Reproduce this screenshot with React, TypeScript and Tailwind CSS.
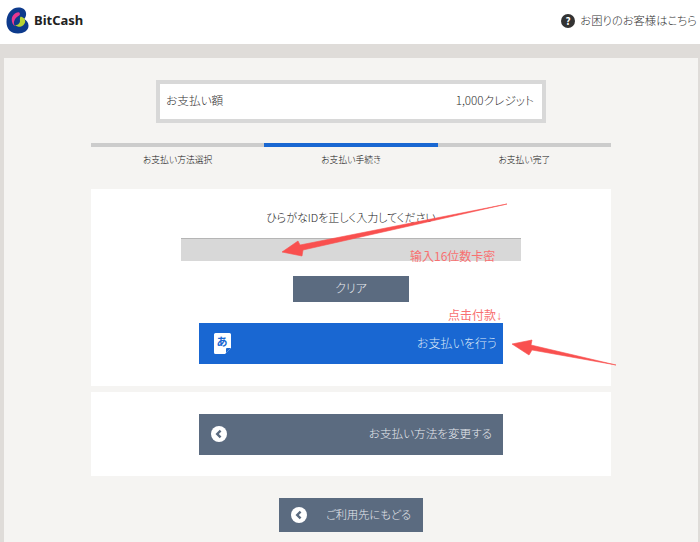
import React from "react";

const font = { fontFamily: '"Noto Sans CJK JP", "Noto Sans", sans-serif' };

function BackIcon() {
  return (
    <svg width="16" height="16" viewBox="0 0 16 16" className="shrink-0">
      <circle cx="8" cy="8" r="8" fill="#fff" />
      <path d="M9.6 4.6 6.2 8l3.4 3.4" fill="none" stroke="#5b6b80" strokeWidth="2.4" />
    </svg>
  );
}

function Logo() {
  return (
    <svg width="23" height="27" viewBox="0 0 24 28" className="shrink-0">
      <path d="M13 .5c5 0 8 2.600 8 6.600 0 2.400-1 4-2 5.400 2.500 1.500 4.500 3.800 4.500 7 0 5-5 8-11 8C5 27.500.5 23 .5 15.500.5 7 6 .5 13 .5z" fill="#0d3a8c" />
      <path d="M13 5.500c-4 .5-7 3.500-7 8 0 3 1.500 5.500 3.500 6.500-1.500-2-1.500-4.500-.5-6.500 1-2 3-4 5-5 1-.6.500-3-1-3z" fill="#e8388f" />
      <path d="M15 10c3 0 5.500 2.500 5 5.500-.6 3-4 5.500-7 5-2-.4-3.500-1.500-3.500-1.500 2 0 4.500-1.500 5-3.500.4-1.600-.5-3.500.5-5.500z" fill="#b7d433" />
    </svg>
  );
}

function PayIcon() {
  return (
    <svg width="17" height="21" viewBox="0 0 17 21" className="shrink-0">
      <path d="M1.500 0h14A1.500 1.500 0 0 1 17 1.500V15l-6 6H1.500A1.500 1.500 0 0 1 0 19.500v-18A1.500 1.500 0 0 1 1.500 0z" fill="#fff" />
      <path d="M12 20l5-5h-4a1 1 0 0 0-1 1z" fill="#1967d2" />
      <text x="8" y="13" textAnchor="middle" fontSize="11" fontWeight="700" fill="#1967d2" style={font}>あ</text>
    </svg>
  );
}

export default function App() {
  return (
    <div className="relative h-[542px] w-[700px] overflow-hidden bg-[#dfdcd9] text-[#333] [font-feature-settings:'palt']" style={font}>
      <header className="flex h-[44px] items-center justify-between bg-white pl-[6px] pr-[3px]">
        <div className="flex items-center gap-[5px] pb-[3px]">
          <Logo />
          <span className="text-[13px] font-bold text-[#222]" style={{ fontFamily: '"Noto Sans", sans-serif' }}>BitCash</span>
        </div>
        <div className="flex items-center gap-[5px] pb-[3px] text-[11.300px] font-light text-[#333]">
          <svg width="14" height="14" viewBox="0 0 14 14" className="shrink-0">
            <circle cx="7" cy="7" r="7" fill="#333" />
            <text x="7" y="10.500" textAnchor="middle" fontSize="10" fontWeight="700" fill="#fff" style={font}>?</text>
          </svg>
          <span>お困りのお客様はこちら</span>
        </div>
      </header>

      <main className="ml-[4px] mr-[2px] mt-[14px] flex h-[484px] flex-col items-center bg-[#f5f4f2] pt-[22px]">
        <div className="flex h-[43px] w-[390px] items-center justify-between border-[4px] border-[#d8d8d8] bg-white pb-[3px] pl-[6px] pr-[8px] text-[11.700px] font-light">
          <span>お支払い額</span>
          <span>1,000クレジット</span>
        </div>

        <div className="mt-[20px] grid w-[520px] grid-cols-3 text-center text-[8.800px] font-light text-[#111]">
          <div>
            <div className="h-[4px] bg-[#cccccc]" />
            <div className="mt-[6px] h-[14px] leading-[14px]">お支払い方法選択</div>
          </div>
          <div>
            <div className="h-[4px] bg-[#1967d2]" />
            <div className="mt-[6px] h-[14px] leading-[14px]">お支払い手続き</div>
          </div>
          <div>
            <div className="h-[4px] bg-[#cccccc]" />
            <div className="mt-[6px] h-[14px] leading-[14px]">お支払い完了</div>
          </div>
        </div>

        <section className="mt-[22px] flex h-[197px] w-[520px] flex-col items-center bg-white pt-[19px]">
          <div className="h-[18px] text-[11px] font-light leading-[18px] text-[#222]">ひらがなIDを正しく入力してください</div>
          <div className="mt-[12px] h-[23px] w-[340px] border-t border-[#b5b5b5] bg-[#d8d8d8]" />
          <button className="mt-[15px] h-[26px] w-[116px] bg-[#5b6b80] pb-[2px] text-[12px] font-light text-[#e6e9ee]">クリア</button>
          <button className="mt-[21px] flex h-[41px] w-[304px] items-center justify-between bg-[#1967d2] pb-[1px] pl-[15px] pr-[6px] text-[12px] font-light text-[#dbe7f8]">
            <PayIcon />
            <span>お支払いを行う</span>
          </button>
        </section>

        <section className="mt-[6px] flex h-[84px] w-[520px] items-center justify-center bg-white">
          <button className="flex h-[41px] w-[304px] items-center justify-between bg-[#5b6b80] pl-[12px] pr-[11px] text-[11.600px] font-light text-[#e6e9ee]">
            <BackIcon />
            <span>お支払い方法を変更する</span>
          </button>
        </section>

        <button className="mt-[22px] flex h-[34px] w-[144px] items-center bg-[#5b6b80] pl-[12px] text-[11.200px] font-light text-[#e6e9ee]">
          <BackIcon />
          <span className="ml-[19px] -translate-y-px">ご利用先にもどる</span>
        </button>
      </main>

      <span className="absolute left-[410px] top-[247px] text-[12px] leading-[17px] text-[#f87171]">输入16位数卡密</span>
      <span className="absolute left-[448px] top-[306px] text-[12px] leading-[17px] text-[#f87171]">点击付款<span style={{ fontFamily: '"Liberation Sans", sans-serif' }}>↓</span></span>

      <svg className="absolute left-0 top-0" width="700" height="542" viewBox="0 0 700 542">
        <path d="M507 204 L303 250 L302 256 L282 252 L298 241 L300 245 Z" fill="#f9504f" stroke="#f9504f" strokeWidth="0.6" />
        <path d="M616 365 L532 350 L529 355 L512 344 L532 340 L531 345 Z" fill="#f9504f" stroke="#f9504f" strokeWidth="0.6" />
      </svg>
    </div>
  );
}
